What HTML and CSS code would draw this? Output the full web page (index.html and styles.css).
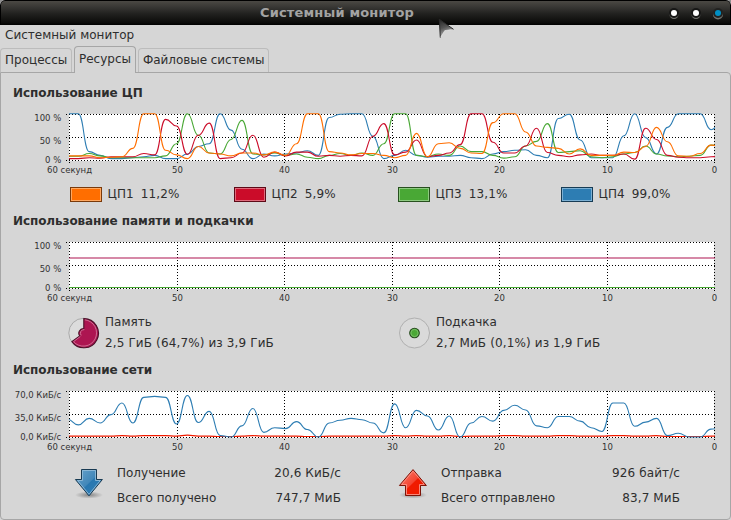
FILE: index.html
```
<!DOCTYPE html>
<html lang="ru">
<head>
  <meta charset="UTF-8" />
  <title>Системный монитор</title>
  <link rel="stylesheet" href="styles.css">
</head>
<body>

<div class="window">
  <header class="titlebar">
    <span class="title">Системный монитор</span>
    <div class="buttons">
      <span class="btn"></span>
      <span class="btn"></span>
      <span class="btn close"></span>
    </div>
  </header>

  <nav class="menubar">Системный монитор</nav>

  <div class="tabs">
    <div class="tab tab-proc">Процессы</div>
    <div class="tab tab-res active">Ресурсы</div>
    <div class="tab tab-fs">Файловые системы</div>
  </div>

  <main class="panel">
    <h2>Использование ЦП</h2>
    <svg class="chart" id="cpuChart"></svg>
    <div class="legend">
      <div class="cpu"><i class="swatch cpu1"></i><span>ЦП1</span><span>11,2%</span></div>
      <div class="cpu"><i class="swatch cpu2"></i><span>ЦП2</span><span>5,9%</span></div>
      <div class="cpu"><i class="swatch cpu3"></i><span>ЦП3</span><span>13,1%</span></div>
      <div class="cpu"><i class="swatch cpu4"></i><span>ЦП4</span><span>99,0%</span></div>
    </div>

    <h2 class="h-mem">Использование памяти и подкачки</h2>
    <svg class="chart" id="memChart"></svg>
    <div class="memory">
      <div class="mem">
        <svg class="pie" width="32" height="32" viewBox="0 0 32 32">
          <circle cx="15.5" cy="16" r="14.7" fill="#dcdcdc" stroke="#aaa" />
          <path d="M15.8 1.6A14.6 14.6 0 1 1 3.9 24.6L11.7 18.9A4.6 4.6 0 0 1 15.8 11.6Z" fill="#ad1551" stroke="#4b1029" stroke-width="1.1" />
          <path d="M16.8 2.8A13.2 13.2 0 1 1 5.5 24.7L12.4 19.4" fill="none" stroke="#d17598" stroke-width="0.9" />
          <path d="M16.4 12.6A3.6 3.6 0 0 0 13.2 18.4" fill="none" stroke="#d17598" />
        </svg>
        <div class="mem-text"><div>Память</div><div class="amount">2,5 ГиБ (64,7%) из 3,9 ГиБ</div></div>
      </div>
      <div class="mem">
        <svg class="pie" width="32" height="32" viewBox="0 0 32 32">
          <circle cx="15.5" cy="16" r="15" fill="#dadada" stroke="#b0b0b0" />
          <circle cx="15.5" cy="16" r="4.8" fill="#4ba836" stroke="#27491f" stroke-width="1.1" />
          <circle cx="15.5" cy="16" r="3.6" fill="none" stroke="#83c574" stroke-width="0.8" />
        </svg>
        <div class="mem-text"><div>Подкачка</div><div class="amount">2,7 МиБ (0,1%) из 1,9 ГиБ</div></div>
      </div>
    </div>

    <h2 class="h-net">Использование сети</h2>
    <svg class="chart" id="netChart"></svg>
    <div class="network">
      <div class="net">
        <svg class="arrow" width="32" height="32" viewBox="0 0 32 32">
          <defs>
            <linearGradient id="blue" x1="0" y1="0" x2="1" y2="1"><stop offset="0" stop-color="#69a4cc" /><stop offset=".5" stop-color="#4187b9" /><stop offset=".52" stop-color="#2877b0" /><stop offset="1" stop-color="#3681b6" /></linearGradient>
            <linearGradient id="red" x1="0" y1="0" x2="1" y2="1"><stop offset="0" stop-color="#f98373" /><stop offset=".5" stop-color="#f54431" /><stop offset=".52" stop-color="#f01b00" /><stop offset="1" stop-color="#f01b00" /></linearGradient>
            <radialGradient id="shade"><stop offset="0" stop-color="#000" stop-opacity=".38" /><stop offset="1" stop-color="#000" stop-opacity="0" /></radialGradient>
          </defs>
          <ellipse cx="16" cy="28" rx="14" ry="3.6" fill="url(#shade)" />
          <path d="M8.5 2.5H23.5V12.5H29.4L16 28.8L2.4 12.5H8.5Z" fill="url(#blue)" stroke="#183a52" />
          <path d="M9.5 3.5H22.5V13.5H27.3L16 27.3L4.6 13.5H9.5Z" fill="none" stroke="#8fbad8" stroke-width="0.9" />
        </svg>
        <div class="net-names"><div>Получение</div><div>Всего получено</div></div>
        <div class="net-values"><div>20,6 КиБ/с</div><div>747,7 МиБ</div></div>
      </div>
      <div class="net sent">
        <svg class="arrow" width="32" height="32" viewBox="0 0 32 32">
          <ellipse cx="16" cy="28" rx="14" ry="3.6" fill="url(#shade)" />
          <path d="M8.5 28.5H23.5V18.5H29.4L16 2.6L2.4 18.5H8.5Z" fill="url(#red)" stroke="#7c1408" />
          <path d="M9.5 27.5H22.5V17.5H27.3L16 4.1L4.6 17.5H9.5Z" fill="none" stroke="#fa9488" stroke-width="0.9" />
        </svg>
        <div class="net-names"><div>Отправка</div><div>Всего отправлено</div></div>
        <div class="net-values"><div>926 байт/с</div><div>83,7 МиБ</div></div>
      </div>
    </div>
  </main>

  <svg class="pointer" width="17" height="21" viewBox="0 0 17 21">
    <defs><linearGradient id="ptr" x1="0" y1="0" x2="0.3" y2="1"><stop offset="0" stop-color="#222" /><stop offset=".5" stop-color="#555" /><stop offset="1" stop-color="#bbb" /></linearGradient></defs>
    <path d="M1.3 1.3L15.5 11.3L6.8 12.4L2.3 19.6Z" fill="url(#ptr)" />
    <path d="M2.3 19.6L1.3 1.3L15.5 11.3" fill="none" stroke="#2a2a2a" />
    <path d="M2.8 19L6.8 12.6L13.5 11.6" fill="none" stroke="#e8e8e8" stroke-width=".6" />
  </svg>
</div>

<script src="script.js"></script>
</body>
</html>
```
FILE: styles.css
```
body {
  margin: 0;
  background: #8f8f8f;
}

.window {
  position: relative;
  width: 731px;
  height: 520px;
  box-sizing: border-box;
  overflow: hidden;
  background: #d6d6d6;
  border-radius: 5px 5px 0 0;
  font-family: "DejaVu Sans", sans-serif;
  font-size: 12px;
  color: #2e2e2e;
  white-space: nowrap;
}

.titlebar {
  position: relative;
  height: 25px;
  box-sizing: border-box;
  border: 1px solid #000;
  border-bottom: 0;
  border-radius: 5px 5px 0 0;
  background: linear-gradient(#4b4944, #383734 25%, #20201e 55%, #0b0b0a 90%, #000);
  display: flex;
  justify-content: center;
}

.title {
  font-size: 13px;
  font-weight: bold;
  line-height: 24px;
  letter-spacing: 0.17px;
  color: #a3a3a3;
  margin-right: 57px;
}

.buttons {
  position: absolute;
  right: 7px;
  top: 7px;
  display: flex;
  gap: 12px;
}

.btn {
  width: 6px;
  height: 6px;
  margin: 2px;
  border-radius: 50%;
  background: #fff;
  box-shadow: 0 0 0 2px #171716, 0 1.5px 0 1.5px #72726e;
}

.close {
  background: #008fc4;
  box-shadow: 0 0 0 2px #222220, 0 1.5px 0 2px #72726e;
}

.menubar {
  height: 21px;
  padding-left: 5px;
  line-height: 21px;
}

.tabs {
  display: flex;
  align-items: flex-end;
  height: 26px;
  gap: 2px;
}

.tab {
  height: 24px;
  box-sizing: border-box;
  border: 1px solid #bcbcbc;
  border-bottom: 0;
  border-radius: 4px 4px 0 0;
  line-height: 23px;
  padding-left: 4px;
}

.tab-proc { width: 72px; }
.tab-res { width: 62px; }

.tab-fs {
  width: 131px;
  letter-spacing: -0.05px;
}

.tab.active {
  height: 27px;
  line-height: 25px;
  margin-bottom: -1px;
  border-color: #a6a6a6;
  background: #d6d6d6;
  position: relative;
}

.panel {
  height: 448px;
  box-sizing: border-box;
  border: 1px solid #a6a6a6;
  border-radius: 0 4px 4px 4px;
  padding-top: 12px;
}

h2 {
  margin: 0 0 12px 12px;
  font-size: 12px;
  line-height: 16px;
  letter-spacing: -0.09px;
}

.h-mem { margin-top: 11px; }
.h-net { margin-top: 8px; }

.chart {
  display: block;
  width: 729px;
  height: 67px;
}

.chart text {
  font-size: 8.5px;
  fill: #333;
}

.grid {
  stroke: #000;
  stroke-dasharray: 1 2;
  shape-rendering: crispEdges;
}

.legend {
  display: grid;
  grid-template-columns: 164px 164px 163px 160px;
  height: 16px;
  margin: 6px 0 0 69px;
}

.cpu {
  display: flex;
  align-items: center;
  gap: 7px;
  letter-spacing: 0.1px;
}

.swatch {
  width: 32px;
  height: 15px;
  box-sizing: border-box;
  border: 1px solid;
  margin-right: -1.5px;
}

.cpu1 { background: #ff6e00; border-color: #7a3a0a; box-shadow: inset 0 0 0 1px #ffa861; }
.cpu2 { background: #cb0c29; border-color: #5e0a17; box-shadow: inset 0 0 0 1px #e0697b; }
.cpu3 { background: #49a835; border-color: #27501e; box-shadow: inset 0 0 0 1px #8dca80; }
.cpu4 { background: #2d7db3; border-color: #173c55; box-shadow: inset 0 0 0 1px #7bb0d4; }

.memory {
  display: grid;
  grid-template-columns: 331px 331px;
  margin: 4px 0 0 67px;
  height: 42px;
}

.mem {
  display: flex;
  align-items: center;
  gap: 5px;
}

.mem-text { line-height: 21px; }
.amount { letter-spacing: 0.13px; }

.network {
  display: grid;
  grid-template-columns: 324px 324px;
  margin: 4px 0 0 72px;
  height: 50px;
}

.net {
  display: flex;
  line-height: 25px;
}

.arrow { margin: 6px 12px 0 0; }
.net-names { width: 130px; }

.net-values {
  width: 94px;
  text-align: right;
  letter-spacing: 0.1px;
}

.sent .net-values { width: 109px; }

.pointer {
  position: absolute;
  left: 438px;
  top: 18px;
}
```
FILE: script.js
```
const NS = "http://www.w3.org/2000/svg";
const LEFT = 68, RIGHT = 713, STEP = 10.91, FIRST = 66.4;

const cpu1 = [10,10,10,6,7,8,26,100,100,22,12,4,30,16,14,10,16,16,12,18,11,36,100,100,19,16,12,15,15,11,6,11,58,8,36,38,26,16,15,81,100,100,61,31,28,26,14,25,11,11,11,18,17,30,71,40,10,9,15,33,31];
const cpu2 = [4,4,6,5,8,8,8,15,12,88,74,13,54,80,4,6,16,54,7,18,10,18,18,9,11,9,11,10,52,79,12,18,44,8,11,16,34,100,100,39,16,16,31,69,17,11,8,12,14,11,11,14,3,69,45,11,7,6,6,8,9];
const cpu3 = [9,9,15,10,6,6,6,6,6,10,36,100,54,16,14,45,86,14,12,16,11,14,7,4,11,15,11,16,11,36,100,100,11,8,14,11,31,19,19,11,5,8,31,41,79,17,19,21,8,6,8,14,17,31,14,10,8,9,11,33,31];
const cpu4 = [100,100,19,11,4,4,6,8,11,4,4,14,30,36,100,65,24,4,14,10,14,16,21,11,92,99,100,100,52,4,11,22,11,7,9,9,11,6,4,14,19,22,23,11,6,90,99,44,6,6,6,53,100,49,14,71,100,100,100,66,83];
const recv = [39,27,41,31,49,74,31,86,88,86,29,90,32,56,4,1,25,62,11,21,19,34,17,1,31,37,41,38,31,10,72,21,58,46,16,46,1,31,45,35,58,69,59,25,21,45,45,35,21,13,74,74,24,33,41,4,9,1,1,18,21];
const sent = [3,3,3,3,3,4,3,4,4,4,3,5,3,3,2,2,3,4,3,3,3,3,2,2,3,3,3,3,3,3,4,3,4,3,3,4,2,3,3,3,4,4,3,3,3,4,4,3,3,3,4,4,3,3,4,2,2,2,2,3,3];

function add(parent, name, attrs, text) {
  const el = document.createElementNS(NS, name);
  for (const key in attrs) el.setAttribute(key, attrs[key]);
  if (text) el.textContent = text;
  parent.appendChild(el);
  return el;
}

function yOf(value) {
  return 0.8 + (100 - value) * 0.467;
}

// each sample is joined to the next with a curve that leaves and arrives flat
function curve(values) {
  let d = `M${FIRST} ${yOf(values[0])}`;
  for (let i = 1; i < values.length; i++) {
    const x = FIRST + i * STEP;
    const mid = x - STEP / 2;
    d += `C${mid} ${yOf(values[i - 1])} ${mid} ${yOf(values[i])} ${x} ${yOf(values[i])}`;
  }
  return d;
}

function drawChart(id, labels, series) {
  const svg = document.getElementById(id);
  const clip = add(svg, "clipPath", { id: id + "Clip" });
  add(clip, "rect", { x: LEFT, y: 0, width: RIGHT - LEFT + 1, height: 48 });
  add(svg, "rect", { x: LEFT, y: 1, width: RIGHT - LEFT, height: 47, fill: "#fff" });

  [1.5, 24.5, 47.5].forEach((y, i) => {
    add(svg, "line", { x1: LEFT - 3, x2: RIGHT + 1, y1: y, y2: y, class: "grid" });
    add(svg, "text", { x: 60.3, y: [8, 31, 49.5][i], "text-anchor": "end" }, labels[i]);
  });

  ["60 секунд", "50", "40", "30", "20", "10", "0"].forEach((label, i) => {
    const x = [68, 176, 283, 391, 498, 606, 713][i] + 0.5;
    add(svg, "line", { x1: x, x2: x, y1: 1, y2: 52, class: "grid" });
    add(svg, "text", { x: x, y: 60, "text-anchor": "middle" }, label);
  });

  series.forEach(([color, values]) => {
    add(svg, "path", { d: curve(values), fill: "none", stroke: color, "stroke-width": 1.1, "clip-path": `url(#${id}Clip)` });
  });
}

drawChart("cpuChart", ["100 %", "50 %", "0 %"], [["#2d7db3", cpu4], ["#49a835", cpu3], ["#cb0c29", cpu2], ["#ff6e00", cpu1]]);
drawChart("memChart", ["100 %", "50 %", "0 %"], [["#ad1551", Array(61).fill(65.4)], ["#49a835", Array(61).fill(2.2)]]);
drawChart("netChart", ["70,0 КиБ/с", "35,0 КиБ/с", "0,0 КиБ/с"], [["#f01b00", sent], ["#2d7db3", recv]]);
```
